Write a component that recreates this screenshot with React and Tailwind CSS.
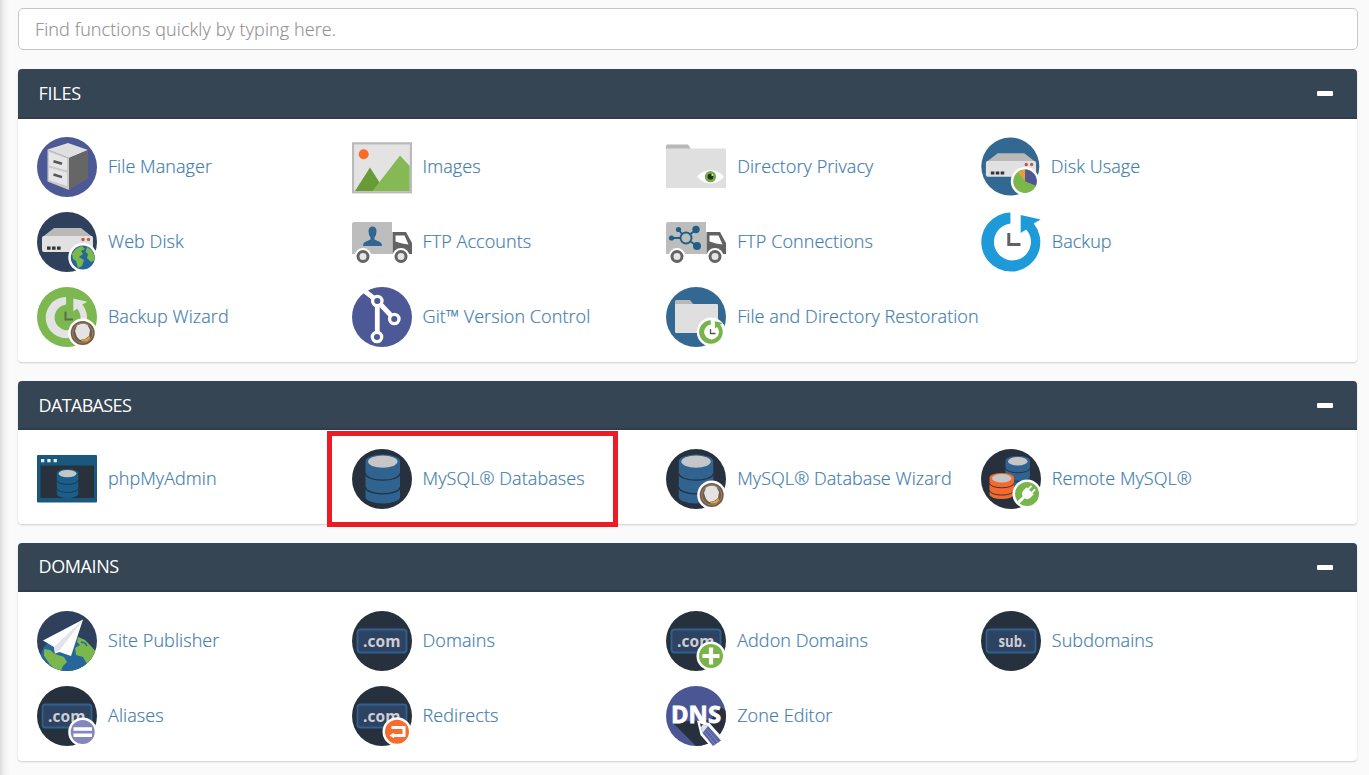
import React from "react";

const NAVY = "#26313d";

function Svg({ children, size = "h-[60px] w-[60px]" }) {
  return (
    <svg viewBox="0 0 60 60" className={`block shrink-0 ${size}`} aria-hidden="true">
      {children}
    </svg>
  );
}

const Disc = ({ fill }) => <circle cx="30" cy="30" r="30" fill={fill} />;

function RestoreArrow({ fill, transform }) {
  return (
    <path
      transform={transform}
      fill={fill}
      d="M28.700 .6A29.500 29.500 0 1 0 52 11.500L59 7.500 39 3V21L44.500 17.500A18.500 18.500 0 1 1 28.700 11.500Z"
    />
  );
}

function Drive() {
  return (
    <g>
      <path d="M17 16H44L55.500 25H5.500Z" fill="#b9b9b9" />
      <rect x="5" y="24" width="51" height="16" rx="2" fill="#e1e1e1" />
      <path d="M10 34.500h3.600v3.200H10zM15 34.500h3.600v3.200H15zM20 34.500h3.600v3.200H20z" fill="#33343a" />
      <circle cx="46" cy="27.500" r="1.700" fill="#c4553f" />
      <circle cx="51.500" cy="27.500" r="1.700" fill="#b5654a" />
    </g>
  );
}

function Truck({ children }) {
  return (
    <g>
      <path d="M2 10H40V42H0V12Q0 10 2 10Z" fill="#bdbdbd" />
      <path d="M40.500 20H54L60 31V42H40.500Z" fill="#626262" />
      <path d="M43.500 23.500H52.500L56.500 32.500 50 31.500 43.500 29.500Z" fill="#fff" />
      {[11, 49].map((x) => (
        <g key={x}>
          <circle cx={x} cy="44.500" r="8.500" fill="#fff" />
          <circle cx={x} cy="44.500" r="5" fill="#e6e6e6" stroke="#636363" strokeWidth="3" />
        </g>
      ))}
      {children}
    </g>
  );
}

function Cylinder({ x, y, w, h, fill, line = NAVY, inset = 2.5 }) {
  const rx = w / 2;
  const ry = w * 0.19;
  const r = x + w;
  const band = (yy) => `M${x} ${yy}A${rx} ${ry} 0 0 0 ${r} ${yy}`;
  return (
    <g>
      <path
        d={`M${x} ${y + ry}A${rx} ${ry} 0 0 1 ${r} ${y + ry}V${y + h - ry}A${rx} ${ry} 0 0 1 ${x} ${y + h - ry}Z`}
        fill={fill}
      />
      <ellipse cx={x + rx} cy={y + ry + 0.5} rx={rx - inset} ry={ry - 0.4} fill="#c6c6c8" />
      <path
        d={band(y + h * 0.39) + band(y + h * 0.67)}
        fill="none"
        stroke={line}
        strokeWidth={w > 30 ? 1.3 : 0.9}
      />
    </g>
  );
}

function Badge({ cx = 45.5, cy = 45.5, fill, children }) {
  return (
    <g>
      <circle cx={cx} cy={cy} r="14.500" fill="#fff" />
      <circle cx={cx} cy={cy} r="12" fill={fill} />
      {children}
    </g>
  );
}

function WizardBadge() {
  return (
    <Badge cx={45.7} cy={46} fill="#705c48">
      <circle cx="45.700" cy="46" r="10" fill="none" stroke="#9a856c" strokeWidth="1" />
      <path d="M40 38.500Q45 35.500 50.500 38L53 43 52 49 48 52 43 53 40 50 38 44Z" fill="#e4e3e1" />
      <path d="M44.500 53L49 52 52.500 49 53 51.500 50 54.500H44.500Z" fill="#dfa13c" />
    </Badge>
  );
}

function DomainTag({ label = ".com", x = 11, w = 37.5 }) {
  return (
    <g>
      <Disc fill={NAVY} />
      <rect x="5.500" y="18.500" width="49" height="23" rx="3" fill="#2d4361" stroke="#2f6191" strokeWidth="1.800" />
      <text
        x={x}
        y="35.500"
        textLength={w}
        lengthAdjust="spacingAndGlyphs"
        fill="#cdced3"
        className="font-['Open_Sans',sans-serif] text-[16px] font-bold"
      >
        {label}
      </text>
    </g>
  );
}

const icons = {
  fileManager: (
    <Svg>
      <Disc fill="#4d5896" />
      <path d="M10.500 12.500L31 6 51 13 32 21Z" fill="#dfdfdf" />
      <path d="M10.500 12.500L32 21V53L10.500 44.500Z" fill="#c9c9c9" />
      <path d="M32 21L51 13V41.500L32 53Z" fill="#666" />
      <path d="M12 15L30 21.500V33.500L12 28.500ZM12 30.500L30 35.500V49L12 43Z" fill="#e6e6e8" />
      <path d="M16.500 24.200L25 26.800M16.500 37.500L25 40.100" stroke="#55555a" strokeWidth="2.500" />
    </Svg>
  ),
  images: (
    <Svg>
      <rect x="1" y="6.300" width="58" height="49" fill="#e3e3e3" stroke="#bababa" strokeWidth="2.200" />
      <circle cx="11.700" cy="17.300" r="5" fill="#fd6b27" />
      <path d="M3 54L18 30.500 33 54Z" fill="#689b38" />
      <path d="M20.500 54L48 18.500 57.700 29V54Z" fill="#84b956" />
    </Svg>
  ),
  directoryPrivacy: (
    <Svg>
      <path d="M1.500 7.500H22L25 12V14H0V9Q0 7.500 1.500 7.500Z" fill="#b8b8b8" />
      <rect y="11.500" width="60" height="39.500" rx="1" fill="#dfdfdf" />
      <path d="M31 39.700Q37 33 44.500 33T58 39.700Q52 46.400 44.500 46.400T31 39.700Z" fill="#fff" />
      <circle cx="44.500" cy="39.700" r="5.600" fill="#76aa49" />
      <circle cx="44.500" cy="39.700" r="2.900" fill="#22361f" />
      <circle cx="46.300" cy="38" r="1" fill="#dfeccf" />
    </Svg>
  ),
  diskUsage: (
    <Svg size="h-[60px] w-[59px]">
      <circle cx="29.800" cy="29.500" r="29.500" fill="#336893" />
      <Drive />
      <Badge cx={44.8} cy={44.5} fill="#7cb74c" />
      <path d="M44.800 44.500V32.500A12 12 0 0 1 55.800 49Z" fill="#4f5696" />
      <path d="M44.800 44.500L37.300 35.200A12 12 0 0 1 44.800 32.500Z" fill="#e0a03c" />
    </Svg>
  ),
  webDisk: (
    <Svg>
      <Disc fill="#2f405d" />
      <Drive />
      <Badge cx={45.8} cy={45.5} fill="#26669a" />
      <path d="M35 42Q38 36 45 34L48 37 44 39 46 42 42 45 47 48 45 54 41 56 39 49 36 47Z" fill="#7ab74d" />
      <path d="M50 35L54.500 38 57.400 43 57.500 48 54 50 50 46 51 42 48.500 40Z" fill="#7ab74d" />
    </Svg>
  ),
  ftpAccounts: (
    <Svg>
      <Truck>
        <path d="M16.500 19A4 4.600 0 0 1 24.500 19Q24.500 23 22.500 25.500V27.500L28 30Q30 31 30 34H11Q11 31 13 30L18.500 27.500V25.500Q16.500 23 16.500 19Z" fill="#2f6693" />
      </Truck>
    </Svg>
  ),
  ftpConnections: (
    <Svg>
      <Truck>
        <g stroke="#205e86" strokeWidth="1.900" fill="none">
          <circle cx="20" cy="26" r="5.500" />
          <path d="M12.500 17.500L16 22M30 17.500L24 22.500M5.500 26H14M31 34L24.500 29.500" />
        </g>
        <g fill="#205e86">
          <circle cx="12.500" cy="17.500" r="2.600" />
          <circle cx="30" cy="17.500" r="3.700" />
          <circle cx="5.500" cy="26" r="2.600" />
          <circle cx="31" cy="34" r="4" />
        </g>
      </Truck>
    </Svg>
  ),
  backup: (
    <Svg>
      <RestoreArrow fill="#1f9ad8" transform="translate(.7 0)" />
      <path d="M27.800 21V32.500H39.500" fill="none" stroke="#606164" strokeWidth="3" />
    </Svg>
  ),
  backupWizard: (
    <Svg>
      <Disc fill="#7cb750" />
      <RestoreArrow fill="#e3e3e3" transform="translate(9 9.500) scale(.7)" />
      <path d="M28.500 24.500V32.500H36" fill="none" stroke="#5d6b50" strokeWidth="2" />
      <WizardBadge />
    </Svg>
  ),
  git: (
    <Svg>
      <Disc fill="#4d5896" />
      <path d="M12 3.500L25.300 14V50M25.300 14L42.300 32" fill="none" stroke="#fff" strokeWidth="4.800" />
      <g fill="#4d5896" stroke="#fff" strokeWidth="3.300">
        <circle cx="25.300" cy="14" r="4.700" />
        <circle cx="42.300" cy="32" r="4.700" />
        <circle cx="25" cy="50" r="4.700" />
      </g>
    </Svg>
  ),
  restoration: (
    <Svg>
      <Disc fill="#336893" />
      <path d="M10 13H24L27.500 17.500V20H9V14Z" fill="#b8b8b8" />
      <rect x="9" y="17" width="43" height="29" rx="1" fill="#dfdfdf" />
      <Badge cx={45.3} cy={45} fill="#fff" />
      <RestoreArrow fill="#78b44b" transform="translate(33.300 33) scale(.4)" />
      <path d="M44.500 42V46.500H49.500" fill="none" stroke="#555" strokeWidth="1.300" />
    </Svg>
  ),
  phpMyAdmin: (
    <Svg>
      <rect y="6" width="60" height="47.500" rx="1" fill="#1a587e" />
      <rect x="3.500" y="16.500" width="53.500" height="32.500" fill="#28313c" />
      <path d="M4 10h3.300v3.300H4zM10.300 10h3.300v3.300h-3.300zM16.600 10h3.300v3.300h-3.300z" fill="#e6eef2" />
      <Cylinder x={19.8} y={20} w={21.5} h={29} fill="#1a5f8b" inset={1.8} />
    </Svg>
  ),
  mysql: (
    <Svg>
      <Disc fill={NAVY} />
      <Cylinder x={13.5} y={5.5} w={34.5} h={49} fill="#30638f" />
    </Svg>
  ),
  mysqlWizard: (
    <Svg>
      <Disc fill={NAVY} />
      <Cylinder x={12.8} y={5.5} w={34.5} h={49} fill="#30638f" />
      <WizardBadge />
    </Svg>
  ),
  remoteMysql: (
    <Svg>
      <Disc fill={NAVY} />
      <Cylinder x={24.5} y={7} w={24.5} h={31} fill="#30638f" />
      <Cylinder x={8.5} y={24} w={24.5} h={26} fill="#f4692e" />
      <Badge cx={46} cy={45} fill="#78b54b" />
      <g transform="rotate(45 46 45)">
        <path d="M41 40.500H51V45Q51 49 47.500 49.500V57H44.500V49.500Q41 49 41 45Z" fill="#fff" />
        <path d="M43.500 41V36M48.500 41V36" stroke="#fff" strokeWidth="1.900" />
      </g>
    </Svg>
  ),
  sitePublisher: (
    <Svg>
      <clipPath id="publisher-disc">
        <circle cx="30" cy="30" r="30" />
      </clipPath>
      <g clipPath="url(#publisher-disc)">
        <rect width="60" height="60" fill="#2f405d" />
        <circle cx="30" cy="51" r="27.500" fill="#26669a" />
        <path d="M7 38L13 39 18 43 27 46 30 51 26 55 24 60H15L12 52 7 45Z" fill="#7ab74d" />
        <path d="M41 26L48 29 54 35 60 42 56 49 50 53 46 46 39 44 38 37 43 34 40 31Z" fill="#7ab74d" />
        <path d="M44 31L48 32 50 35M13 54L17 59" stroke="#26669a" strokeWidth="1.400" fill="none" />
      </g>
      <path d="M46 8.500L6 29.500 17 36 18 42.500 22.500 41 34 45Z" fill="#fff" />
      <path d="M46 8.500L17 36 18 42.500 22.500 39.500Z" fill="#e3e4ea" />
    </Svg>
  ),
  domains: (
    <Svg>
      <DomainTag />
    </Svg>
  ),
  addonDomains: (
    <Svg>
      <DomainTag />
      <Badge cx={45} cy={45} fill="#7ab449" />
      <path d="M45 36.500V53.500M36.500 45H53.500" stroke="#fff" strokeWidth="4.200" />
    </Svg>
  ),
  subdomains: (
    <Svg>
      <DomainTag label="sub." x={17.5} w={27.5} />
    </Svg>
  ),
  aliases: (
    <Svg>
      <DomainTag />
      <Badge cx={45.7} cy={46} fill="#8487bd" />
      <path d="M36.500 43H55M36.500 49.300H55" stroke="#fff" strokeWidth="3.600" />
    </Svg>
  ),
  redirects: (
    <Svg>
      <DomainTag />
      <Badge cx={45} cy={45.7} fill="#f76c2e" />
      <path d="M39.500 41.500H52V49.500H40.500" fill="none" stroke="#fff" strokeWidth="3" />
      <path d="M42 46.800V52.200L37.500 49.500Z" fill="#fff" />
    </Svg>
  ),
  zoneEditor: (
    <Svg>
      <clipPath id="zone-disc">
        <circle cx="30" cy="30" r="30" />
      </clipPath>
      <g clipPath="url(#zone-disc)">
        <rect width="60" height="60" fill="#4b5794" />
        <path d="M6 36L32 62H62V27L54 20 45 34Z" fill={NAVY} />
      </g>
      <text
        x="5"
        y="36.500"
        textLength="50"
        lengthAdjust="spacingAndGlyphs"
        fill="#fff"
        stroke="#fff"
        strokeWidth=".8"
        className="font-['Open_Sans',sans-serif] text-[23px] font-bold"
      >
        DNS
      </text>
      <path d="M31 34.500L43.500 37 58 53.500 46 62 34.500 49Z" fill="#fff" />
      <path d="M34 37.500L42 40 55 54.500 47 60 36.500 47Z" fill="#5964a4" />
      <path d="M34 37.500L42 40 36.500 47Z" fill="#e2e3ec" />
      <path d="M34 37.500L37 38.500 35 41Z" fill="#353c52" />
      <path d="M38.500 45.500L49 58.500M40.500 43L52 56.500" stroke="#8088bd" strokeWidth="1" />
    </Svg>
  ),
};

const panels = [
  {
    title: "FILES",
    header: "h-[50px]",
    body: "pt-[18px]",
    titleStyle: "tracking-[-0.25px]",
    toggle: "mt-px",
    items: [
      ["fileManager", "File Manager"],
      ["images", "Images"],
      ["directoryPrivacy", "Directory Privacy"],
      ["diskUsage", "Disk Usage"],
      ["webDisk", "Web Disk"],
      ["ftpAccounts", "FTP Accounts"],
      ["ftpConnections", "FTP Connections"],
      ["backup", "Backup"],
      ["backupWizard", "Backup Wizard"],
      ["git", "Git™ Version Control"],
      ["restoration", "File and Directory Restoration"],
    ],
  },
  {
    title: "DATABASES",
    header: "h-[49px]",
    body: "pt-[19px]",
    titleStyle: "pt-0.5 tracking-[-0.65px]",
    toggle: "mt-0.5",
    items: [
      ["phpMyAdmin", "phpMyAdmin"],
      ["mysql", "MySQL® Databases", true],
      ["mysqlWizard", "MySQL® Database Wizard"],
      ["remoteMysql", "Remote MySQL®"],
    ],
  },
  {
    title: "DOMAINS",
    header: "h-[49px]",
    body: "pt-[19px]",
    titleStyle: "tracking-[-0.4px]",
    toggle: "mt-0.5",
    items: [
      ["sitePublisher", "Site Publisher"],
      ["domains", "Domains"],
      ["addonDomains", "Addon Domains"],
      ["subdomains", "Subdomains"],
      ["aliases", "Aliases"],
      ["redirects", "Redirects"],
      ["zoneEditor", "Zone Editor"],
    ],
  },
];

function Item({ icon, label, highlighted }) {
  return (
    <a
      href="#"
      className="relative flex h-[60px] items-center gap-[11px] whitespace-nowrap text-[18px] font-light tracking-[0.07px] text-[#427eab] [-webkit-text-stroke:0.2px_#427eab]"
    >
      {icons[icon]}
      <span className="-mt-0.5">{label}</span>
      {highlighted && (
        <span className="absolute -left-[25px] -top-[18px] h-[96px] w-[291px] border-[5px] border-[#ed1c24]" />
      )}
    </a>
  );
}

function Panel({ panel }) {
  return (
    <section className="rounded-[4px] bg-white shadow-[0_1px_2px_rgba(0,0,0,0.18)]">
      <header
        className={`flex items-center justify-between rounded-t-[4px] border-b-2 border-[#303e4c] bg-[#354554] pl-[20.5px] pr-6 ${panel.header}`}
      >
        <h2 className={`text-[18px] text-white ${panel.titleStyle}`}>{panel.title}</h2>
        <span className={`h-[5px] w-4 rounded-[1px] bg-white ${panel.toggle}`} />
      </header>
      <div className={`grid grid-cols-[repeat(4,314.6px)] gap-y-[15px] pb-[15px] pl-[19px] ${panel.body}`}>
        {panel.items.map(([icon, label, highlighted]) => (
          <Item key={label} icon={icon} label={label} highlighted={highlighted} />
        ))}
      </div>
    </section>
  );
}

export default function App() {
  return (
    <main className="flex h-[775px] w-[1369px] overflow-hidden bg-[#fafafa] font-['Open_Sans',sans-serif]">
      <div className="w-[10px] shrink-0 bg-linear-to-r from-[#dcdcdc] via-[#f3f3f3] to-[#fafafa]" />
      <div className="flex w-[1348px] flex-col gap-[19px] pl-2 pt-2">
        <input
          type="text"
          placeholder="Find functions quickly by typing here."
          className="h-[42px] w-full rounded-[5px] border border-[#c6c6c6] bg-white px-4 text-[18px] font-light tracking-[0.1px] text-[#555] outline-none [-webkit-text-stroke:0.15px_#909090] placeholder:text-[#909090]"
        />
        <div className="flex w-[1339px] flex-col gap-[19px]">
          {panels.map((panel) => (
            <Panel key={panel.title} panel={panel} />
          ))}
        </div>
      </div>
    </main>
  );
}
